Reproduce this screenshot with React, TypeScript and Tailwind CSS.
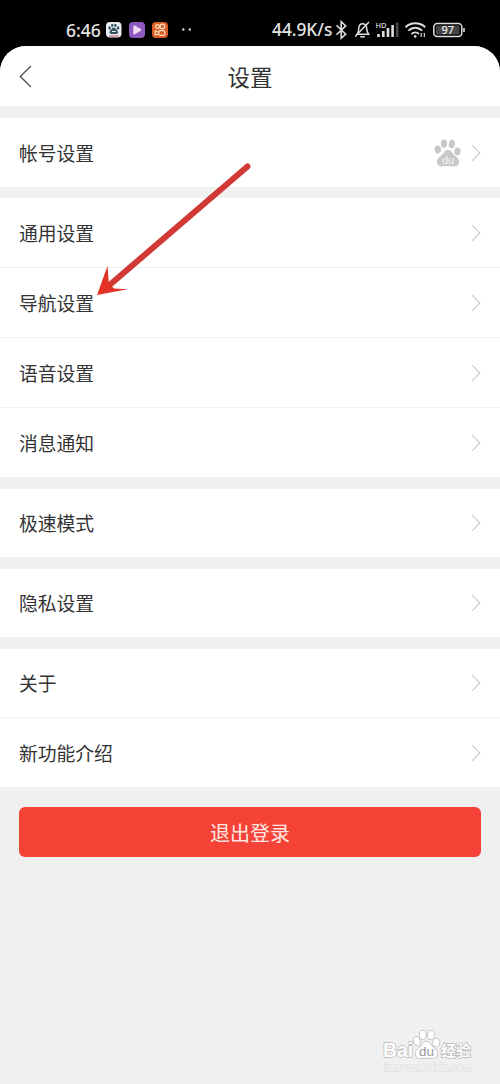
type RowProps = { label: string; className: string; badge?: boolean };

function Chevron() {
  return (
    <svg className="h-5 w-3 shrink-0" viewBox="0 0 12 20" fill="none" stroke="#cecece" strokeWidth="1.2">
      <path d="M2.2 2.3 10 10l-7.8 7.7" />
    </svg>
  );
}

function AccountPaw() {
  return (
    <svg className="mr-[9px] h-7 w-[27px] shrink-0" viewBox="0 0 27 28">
      <g fill="#c8c8c8">
        <ellipse cx="3.8" cy="10.5" rx="3.2" ry="4" transform="rotate(-12 3.8 10.5)" />
        <ellipse cx="10" cy="4.6" rx="3.1" ry="4.2" />
        <ellipse cx="17.8" cy="5" rx="3.1" ry="4.2" transform="rotate(12 17.8 5)" />
        <ellipse cx="23.5" cy="12.3" rx="3.1" ry="4" transform="rotate(12 23.5 12.3)" />
        <path d="M13.8 10.8c-3 0-3.8 3.3-5.9 5.3-2.3 2.1-5.6 3.9-4.8 7.8.7 3.5 3.8 3.7 6.6 3.4 3.1-.4 5-.4 8 0 3 .4 6.5.2 7.2-3.6.7-3.7-2.5-5.5-4.6-7.6-2.2-2.2-3.4-5.3-6.5-5.3Z" />
      </g>
      <text x="14" y="24.5" textAnchor="middle" fontFamily="Liberation Sans, sans-serif" fontSize="11" fill="#f5f5f5">du</text>
    </svg>
  );
}

function Row({ label, className, badge }: RowProps) {
  return (
    <div className={`flex w-full shrink-0 items-center bg-white pr-[18px] pl-[19px] ${className}`}>
      <span className="flex-1 text-[18.8px] leading-7 text-[#333]">{label}</span>
      {badge && <AccountPaw />}
      <Chevron />
    </div>
  );
}

function StatusBar() {
  return (
    <div className="flex h-[46px] shrink-0 items-center pt-[13px] pl-[66px] font-['Noto_Sans',sans-serif] text-[#e4e4e4]">
      <span className="w-[40px] text-[17.5px] leading-6 font-medium">6:46</span>
      <svg className="h-6 w-[90px] shrink-0" viewBox="106 18 90 24">
        <rect x="106" y="22" width="15.5" height="15.5" rx="4" fill="#e9f0f3" />
        <g fill="#35515e">
          <ellipse cx="109.6" cy="28" rx="1.3" ry="1.7" />
          <ellipse cx="112.2" cy="25.3" rx="1.2" ry="1.6" />
          <ellipse cx="115.4" cy="25.3" rx="1.2" ry="1.6" />
          <ellipse cx="118" cy="28" rx="1.3" ry="1.7" />
          <path d="M113.8 27.6c-2 0-2.3 2-3.6 3.1-1.2 1.2-.9 3.1.8 3.3h5.6c1.7-.2 2-2.1.8-3.3-1.3-1.1-1.6-3.1-3.6-3.1Z" />
        </g>
        <path d="M112 31.5h3.8" stroke="#e9f0f3" />
        <path d="M109 36h10" stroke="#cc7180" strokeWidth="1.2" />
        <rect x="129" y="22" width="16" height="16" rx="4" fill="#8d5ac0" />
        <path d="M134.3 26.3v7.2l6-3.6Z" fill="#f3d8fa" stroke="#f3d8fa" strokeWidth="2" strokeLinejoin="round" />
        <rect x="152" y="22" width="16" height="16" rx="4" fill="#d75c28" />
        <g fill="none" stroke="#ffe2bd" strokeWidth="1.2">
          <circle cx="157.5" cy="26.6" r="1.9" />
          <circle cx="162.4" cy="26.4" r="2.3" />
          <rect x="158.8" y="30.6" width="6" height="4.8" rx="1.5" />
          <path d="m158.5 32-3.2-1v4l3.2-1" />
        </g>
        <circle cx="183.3" cy="29.5" r="1.2" fill="#d5d5d5" />
        <circle cx="189.8" cy="29.5" r="1.2" fill="#d5d5d5" />
      </svg>
      <span className="ml-[76px] w-[61px] text-[17.3px] leading-6 font-medium whitespace-nowrap">44.9K/s</span>
      <svg className="h-6 w-[135px] shrink-0" viewBox="333 18 135 24" fill="none" stroke="#dedede">
        <path d="m336.5 25.2 9.2 9-4.5 4.1V21.7l4.5 4.2-9.2 8.9" strokeWidth="1.6" />
        <path d="M357.2 34.2c1.6-2 1.3-4 1.6-6.2.3-2.8 2.1-4.2 3.7-4.2 2.6 0 4.1 2 4.2 4.8.1 2.3.4 3.8 1.9 5.6Z" strokeWidth="1.5" />
        <path d="M355.2 36.5 369 22" strokeWidth="1.5" />
        <path d="M360.3 36.8h4.5" strokeWidth="1.6" />
        <text x="375.5" y="27.8" fill="#dedede" stroke="none" fontFamily="Noto Sans, sans-serif" fontSize="7.5" fontWeight="500">HD</text>
        <path d="M378.5 34v3M383.3 31v6M388 28v9M392.6 25v12" strokeWidth="2.6" />
        <path d="M397.2 22.5V37" stroke="#494949" strokeWidth="2.6" />
        <path d="M405.5 27.2c5.5-5.2 14.2-5.2 19.7 0M408.4 30.6c4-3.8 9.8-3.8 13.8 0M411.5 34c2.2-2.1 5.3-2.1 7.5 0" strokeWidth="1.9" />
        <circle cx="415.2" cy="36.4" r="1.3" fill="#dedede" stroke="none" />
        <path d="M421.2 33v4M424.3 33v4" strokeWidth="1.2" />
        <rect x="433.8" y="23.5" width="28" height="13" rx="3.5" strokeWidth="1.5" />
        <rect x="436" y="25.5" width="23.5" height="9" rx="1" fill="#444" stroke="none" />
        <path d="M464 28v4" strokeWidth="1.6" />
        <text x="447.8" y="34" textAnchor="middle" fill="#f3f3f3" stroke="none" fontFamily="Noto Sans, sans-serif" fontSize="11" fontWeight="500">97</text>
      </svg>
    </div>
  );
}

function Watermark() {
  return (
    <svg className="absolute top-[1024px] left-[378px] h-[56px] w-[100px]" viewBox="378 1024 100 56">
      <g fill="#fff" stroke="#b8b8b8" strokeWidth="1.5" paintOrder="stroke" strokeLinejoin="round">
        <text x="383" y="1057" fontFamily="Liberation Sans, sans-serif" fontSize="20" fontWeight="700" textLength="30" lengthAdjust="spacingAndGlyphs">Bai</text>
        <ellipse cx="416.8" cy="1041" rx="3" ry="4" transform="rotate(-12 416.8 1041)" />
        <ellipse cx="422.8" cy="1034.8" rx="3.1" ry="4.3" />
        <ellipse cx="431" cy="1035" rx="3.2" ry="4.3" transform="rotate(12 431 1035)" />
        <ellipse cx="436.3" cy="1042.5" rx="3.1" ry="4" transform="rotate(16 436.3 1042.5)" />
        <path d="M426.5 1041.5c-3.3 0-4 3.2-6 5.2-2.4 2.3-5.7 4-4.8 8 .8 3.6 3.8 3.8 6.6 3.4 2.7-.4 5.7-.4 8.4 0 3 .4 5.9.1 6.5-3.6.6-3.8-2.4-5.4-4.7-7.7-2-2-2.8-5.3-6-5.3Z" />
        <text x="441" y="1056" fontFamily="Noto Sans CJK SC, sans-serif" fontSize="15" fontWeight="700" textLength="30" lengthAdjust="spacingAndGlyphs">经验</text>
      </g>
      <text x="426.5" y="1055.5" textAnchor="middle" fontFamily="Liberation Sans, sans-serif" fontSize="13.5" fontWeight="400" fill="#999">du</text>
      <text x="384" y="1070.5" fontFamily="Liberation Sans, sans-serif" fontSize="10" fill="#fafafa" stroke="#d6d6d6" strokeWidth=".8" paintOrder="stroke" textLength="88" lengthAdjust="spacingAndGlyphs">jingyan.baidu.com</text>
    </svg>
  );
}

export default function App() {
  return (
    <div className="relative h-[1084px] w-[500px] overflow-hidden bg-black font-['Noto_Sans_CJK_SC',sans-serif]">
      <div className="flex h-full flex-col">
        <StatusBar />
        <main className="flex flex-1 flex-col overflow-hidden rounded-t-[26px] bg-[#f0f0f0]">
          <header className="flex h-[60px] shrink-0 items-center bg-white px-[18px]">
            <svg className="h-6 w-[15px]" viewBox="0 0 15 24" fill="none" stroke="#555" strokeWidth="1.4">
              <path d="M13 2 2.3 12.5 13 23" />
            </svg>
            <h1 className="mr-[15px] flex-1 text-center text-[22.5px] leading-8 text-[#333]">设置</h1>
          </header>
          <section className="pt-3">
            <Row label="帐号设置" className="h-[69px] pt-[1px]" badge />
          </section>
          <section className="mt-[11px]">
            <Row label="通用设置" className="h-[70px] border-b border-[#f0f0f0]" />
            <Row label="导航设置" className="h-[70px] border-b border-[#f0f0f0]" />
            <Row label="语音设置" className="h-[70px] border-b border-[#f0f0f0]" />
            <Row label="消息通知" className="h-[69px] pt-[1px]" />
          </section>
          <section className="mt-3">
            <Row label="极速模式" className="h-[68px]" />
          </section>
          <section className="mt-3">
            <Row label="隐私设置" className="h-[68px]" />
          </section>
          <section className="mt-3">
            <Row label="关于" className="h-[69px] border-b border-[#f0f0f0]" />
            <Row label="新功能介绍" className="h-[69px] pt-[1px]" />
          </section>
          <button className="mx-[19px] mt-5 flex h-[50px] shrink-0 items-center justify-center rounded-md bg-[#f44336] pt-[1px] text-[20px] leading-7 text-[#ffe8e3]">
            退出登录
          </button>
        </main>
      </div>
      <svg className="pointer-events-none absolute top-[155px] left-[90px] h-[150px] w-[170px]" viewBox="90 155 170 150">
        <path d="M247.5 166.5 109 285.5" stroke="#d13a34" strokeWidth="6" strokeLinecap="round" />
        <path d="M97 295 107.5 266l1.3 17.5 5.2 5 13.5.8Z" fill="#e33225" />
      </svg>
      <Watermark />
    </div>
  );
}
